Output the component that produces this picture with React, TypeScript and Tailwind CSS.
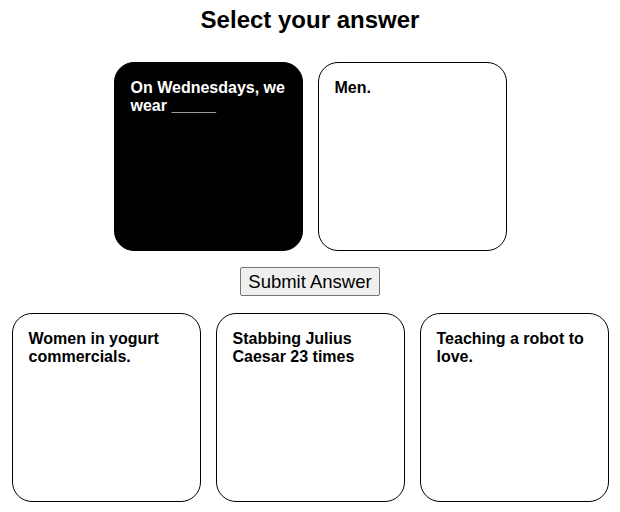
import React from "react";

function Card({ text, dark }: { text: string; dark?: boolean }) {
  return (
    <div
      className={
        "w-[189px] h-[189px] shrink-0 rounded-[20px] border border-black p-4 text-[16px] font-bold leading-[18px] " +
        (dark ? "bg-black text-white" : "bg-white text-black")
      }
    >
      {text}
    </div>
  );
}

export default function App() {
  return (
    <div className="w-[620px] h-[512px] bg-white flex flex-col items-center pt-[6px] font-['Liberation_Sans',Arial,sans-serif] text-black">
      <h1 className="text-[24px] font-bold leading-[28px]">Select your answer</h1>
      <div className="mt-[28px] flex gap-[15px]">
        <Card text="On Wednesdays, we wear _____" dark />
        <Card text="Men." />
      </div>
      <button className="mt-[16px] h-[29px] px-[7px] bg-[#efefef] border border-[#767676] rounded-[2px] text-[18.5px] leading-[22px] text-black">
        Submit Answer
      </button>
      <div className="mt-[17px] flex gap-[15px]">
        <Card text="Women in yogurt commercials." />
        <Card text="Stabbing Julius Caesar 23 times" />
        <Card text="Teaching a robot to love." />
      </div>
    </div>
  );
}
